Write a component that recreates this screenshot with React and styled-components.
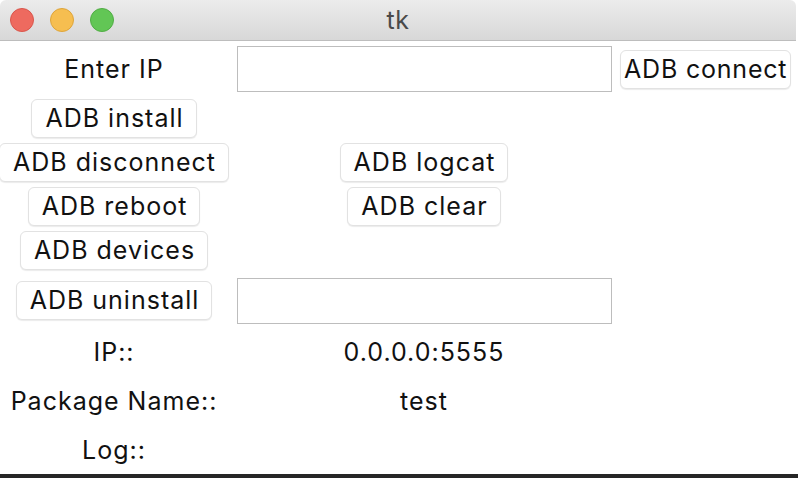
import React from "react";
import styled, { createGlobalStyle } from "styled-components";

const Global = createGlobalStyle`
  html, body {
    margin: 0;
    padding: 0;
    background: #ffffff;
  }
  * {
    box-sizing: border-box;
  }
`;

const Page = styled.div`
  width: 798px;
  height: 478px;
  display: flex;
  flex-direction: column;
  overflow: hidden;
  font-family: Inter, "Liberation Sans", sans-serif;
`;

const Window = styled.div`
  width: 796px;
  height: 474px;
  display: flex;
  flex-direction: column;
  background: #fff;
`;

const TitleBar = styled.div`
  height: 41px;
  flex: none;
  display: flex;
  align-items: center;
  position: relative;
  padding-left: 10px;
  gap: 16px;
  background: linear-gradient(#ececec, #d8d8d8);
  border-bottom: 1px solid #bdbdbd;
  border-top-left-radius: 6px;
  border-top-right-radius: 6px;
`;

const Light = styled.span`
  width: 24px;
  height: 24px;
  border-radius: 50%;
  background: ${(p) => p.$color};
  border: 1px solid ${(p) => p.$edge};
`;

const Title = styled.div`
  position: absolute;
  left: 0;
  right: 0;
  top: 0;
  bottom: 0;
  display: flex;
  align-items: center;
  justify-content: center;
  font-size: 25px;
  letter-spacing: 0.5px;
  color: #4a4a4a;
  pointer-events: none;
`;

const Body = styled.div`
  display: grid;
  grid-template-columns: 228px 392px 176px;
  grid-template-rows: 56px 43px 44px 44px 45px 55px 48px 49px 49px;
  align-items: center;
`;

const Cell = styled.div`
  grid-column: ${(p) => p.$col};
  grid-row: ${(p) => p.$row};
  justify-self: ${(p) => p.$justify || "center"};
  display: flex;
`;

const Button = styled.button`
  height: 39px;
  padding: ${(p) => (p.$compact ? "0 3px" : "0 12px 0 13px")};
  background: #fff;
  border: 1px solid #e2e2e2;
  border-radius: 6px;
  box-shadow: 0 1px 1px rgba(0, 0, 0, 0.08);
  font-family: inherit;
  font-size: 25px;
  letter-spacing: ${(p) => (p.$compact ? "0.8px" : "1px")};
  color: #111;
  white-space: nowrap;
  line-height: 1;
`;

const Label = styled.span`
  font-size: 25px;
  letter-spacing: 1px;
  color: #111;
  white-space: nowrap;
`;

const Entry = styled.input`
  width: 375px;
  height: ${(p) => p.$h}px;
  border: 1px solid #bdbdbd;
  background: #fff;
  outline: none;
  font-family: inherit;
  font-size: 24px;
  padding: 0 4px;
`;

const Desktop = styled.div`
  flex: 1;
  background: #262626;
`;

function App() {
  return (
    <>
      <Global />
      <Page>
        <Window>
          <TitleBar>
            <Light $color="#ee6a5f" $edge="#d9564c" />
            <Light $color="#f6be50" $edge="#dea53a" />
            <Light $color="#62c655" $edge="#51ad45" />
            <Title>tk</Title>
          </TitleBar>
          <Body>
            <Cell $col={1} $row={1}><Label>Enter IP</Label></Cell>
            <Cell $col={2} $row={1}><Entry $h={46} /></Cell>
            <Cell $col={3} $row={1} $justify="start"><Button $compact>ADB connect</Button></Cell>

            <Cell $col={1} $row={2}><Button>ADB install</Button></Cell>

            <Cell $col={1} $row={3}><Button>ADB disconnect</Button></Cell>
            <Cell $col={2} $row={3}><Button>ADB logcat</Button></Cell>

            <Cell $col={1} $row={4}><Button>ADB reboot</Button></Cell>
            <Cell $col={2} $row={4}><Button>ADB clear</Button></Cell>

            <Cell $col={1} $row={5}><Button>ADB devices</Button></Cell>

            <Cell $col={1} $row={6}><Button>ADB uninstall</Button></Cell>
            <Cell $col={2} $row={6}><Entry $h={46} /></Cell>

            <Cell $col={1} $row={7}><Label>IP::</Label></Cell>
            <Cell $col={2} $row={7}><Label>0.0.0.0:5555</Label></Cell>

            <Cell $col={1} $row={8}><Label>Package Name::</Label></Cell>
            <Cell $col={2} $row={8}><Label>test</Label></Cell>

            <Cell $col={1} $row={9}><Label>Log::</Label></Cell>
          </Body>
        </Window>
        <Desktop />
      </Page>
    </>
  );
}

export default App;
